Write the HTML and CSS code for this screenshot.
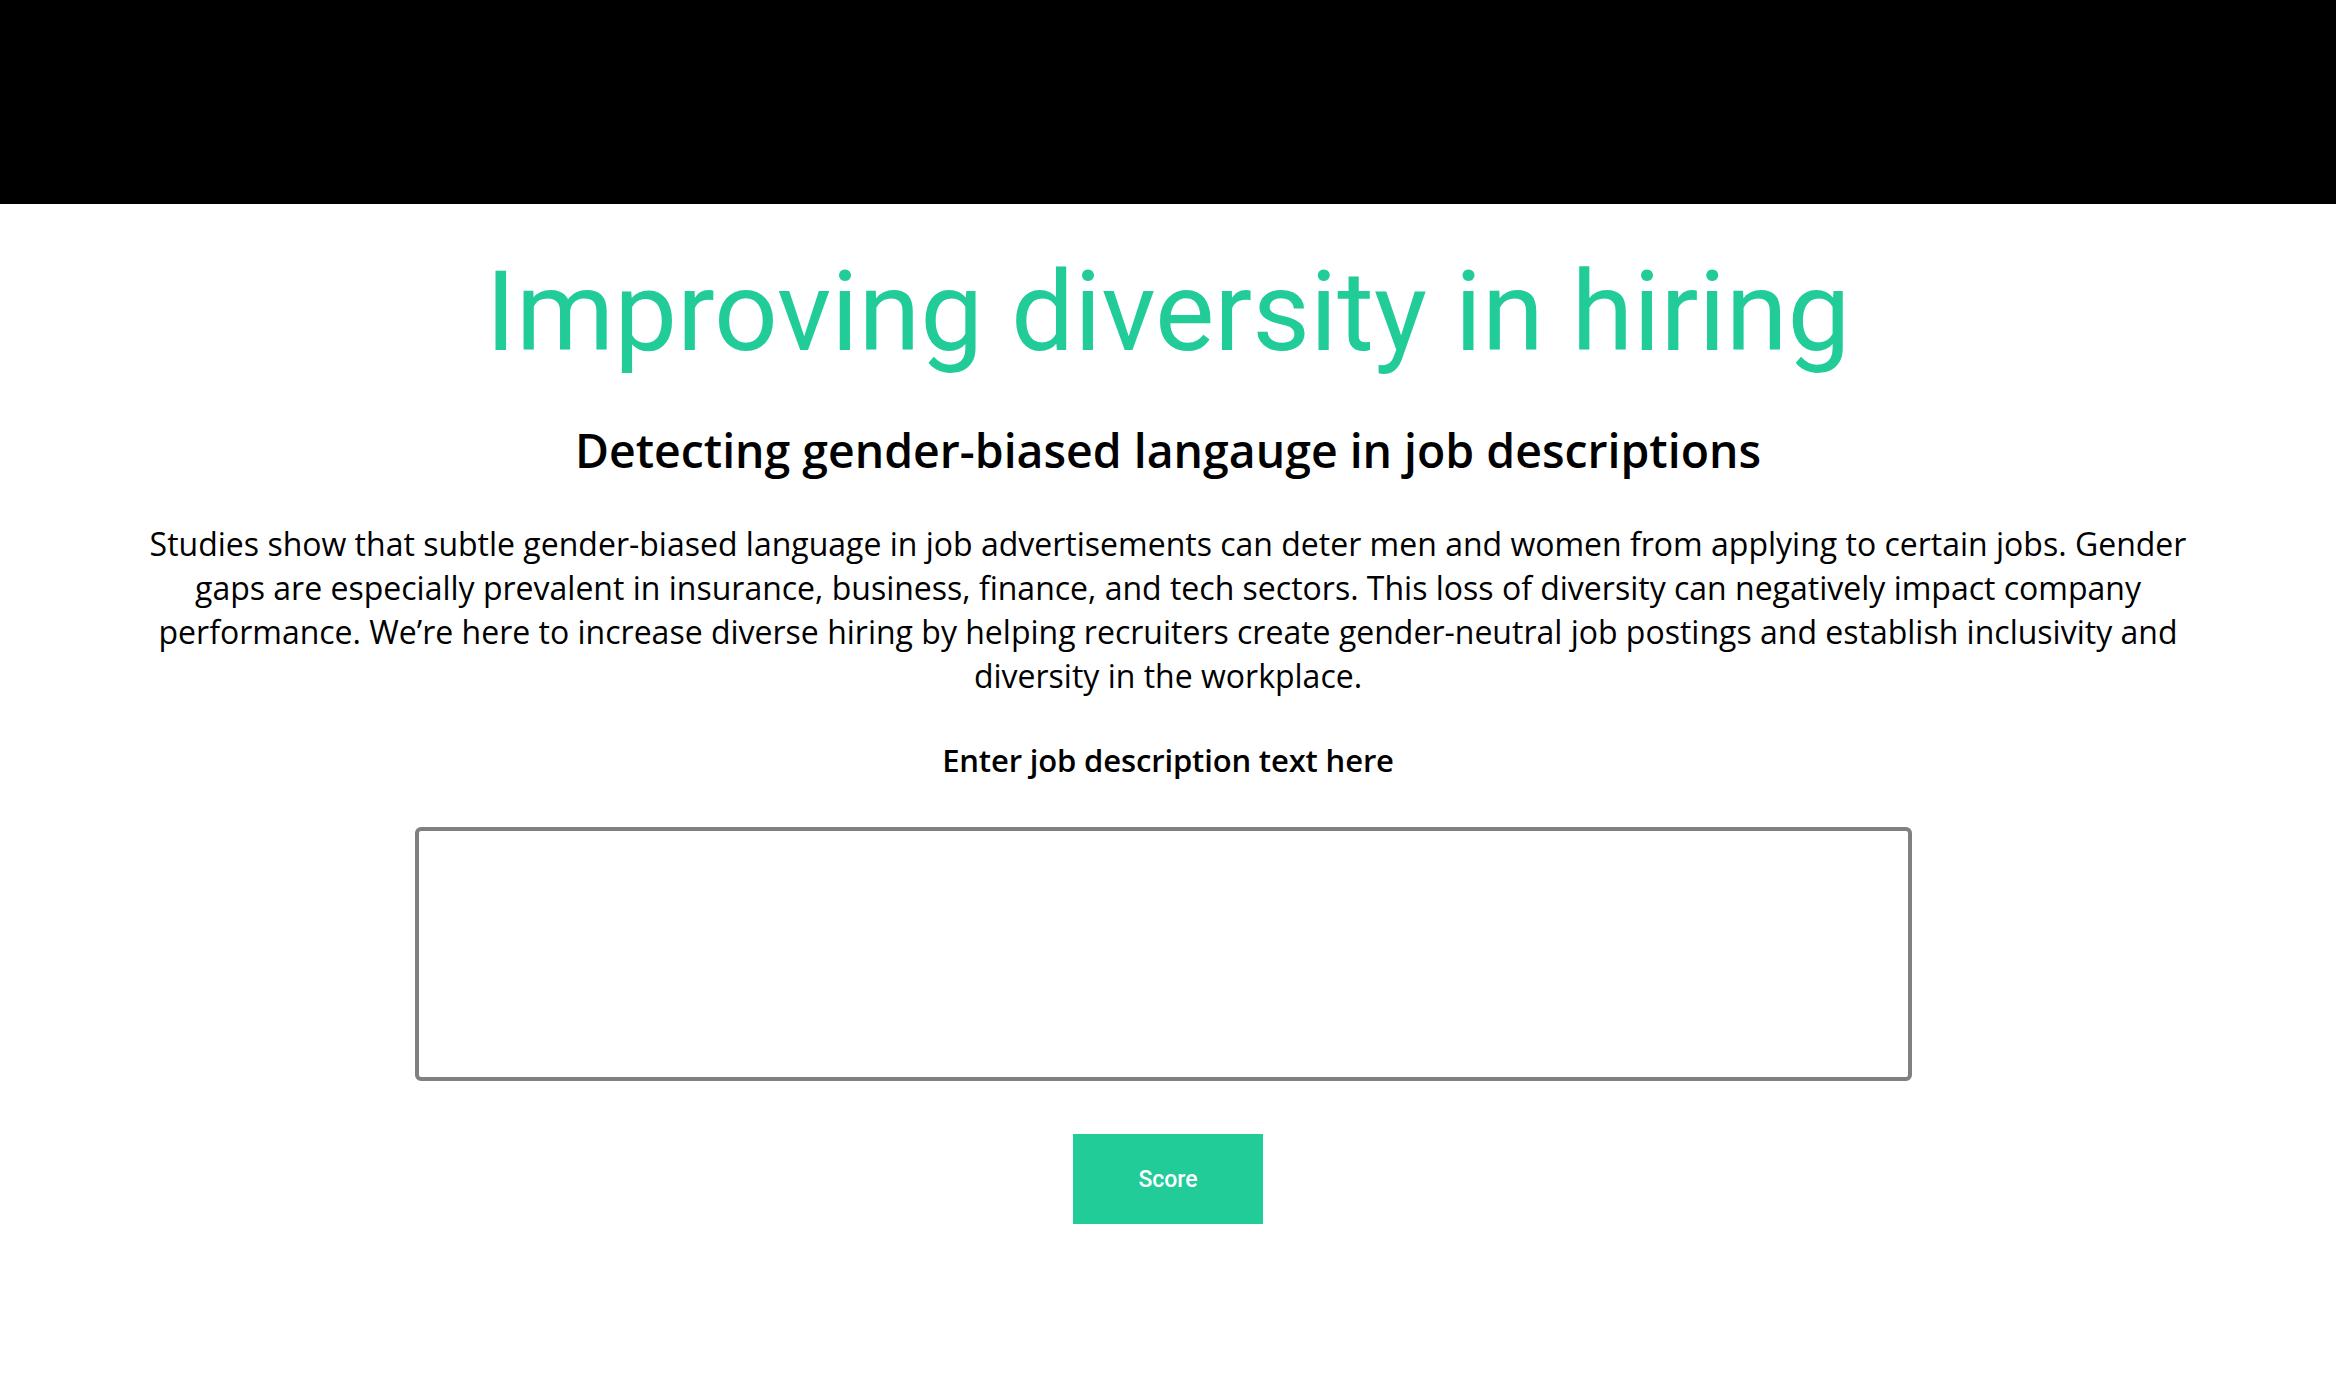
FILE: index.html
```html
<!DOCTYPE html>
<html>
<head>
<meta charset="utf-8">
<link rel="stylesheet" href="styles.css">
</head>
<body>
<header class="topbar"></header>
<main class="content">
  <h1 class="title">Improving diversity in hiring</h1>
  <h2 class="subtitle">Detecting gender-biased langauge in job descriptions</h2>
  <p class="intro">Studies show that subtle gender-biased language in job advertisements can deter men and women from applying to certain jobs. Gender gaps are especially prevalent in insurance, business, finance, and tech sectors. This loss of diversity can negatively impact company performance. We’re here to increase diverse hiring by helping recruiters create gender-neutral job postings and establish inclusivity and diversity in the workplace.</p>
  <form class="form">
    <label class="label" for="jd">Enter job description text here</label>
    <textarea id="jd" class="jd-input"></textarea>
    <button type="button" class="score-btn">Score</button>
  </form>
</main>
</body>
</html>
```

FILE: styles.css
```css
html, body {
  margin: 0;
  padding: 0;
  background: #ffffff;
}

.topbar {
  height: 204px;
  background: #000000;
}

.content {
  display: flex;
  flex-direction: column;
  align-items: center;
  text-align: center;
}

.title {
  margin: 42px 0 0;
  font-family: Roboto, sans-serif;
  font-weight: 400;
  font-size: 112px;
  line-height: 132px;
  color: #21cc99;
}

.subtitle {
  margin: 40px 0 0;
  font-family: "Open Sans", sans-serif;
  font-weight: 600;
  font-size: 46.4px;
  line-height: 64px;
  color: #000000;
}

.intro {
  margin: 40px 0 0;
  width: 2080px;
  font-family: "Open Sans", sans-serif;
  font-weight: 400;
  font-size: 32px;
  line-height: 44px;
  color: #000000;
}

.form {
  display: flex;
  flex-direction: column;
  align-items: center;
}

.label {
  margin-top: 40px;
  font-family: "Open Sans", sans-serif;
  font-weight: 600;
  font-size: 31px;
  line-height: 44px;
  letter-spacing: -0.15px;
  color: #000000;
}

.jd-input {
  box-sizing: border-box;
  margin: 45px 9px 0 0;
  width: 1497px;
  height: 254px;
  border: 4px solid #808080;
  border-radius: 6px;
  resize: none;
  outline: none;
  background: #ffffff;
}

.score-btn {
  margin-top: 53px;
  width: 190px;
  height: 90px;
  border: none;
  background: #21cc99;
  color: #ffffff;
  font-family: Roboto, "Liberation Sans", Arial, sans-serif;
  font-size: 23px;
  font-weight: 500;
  padding: 0;
}
```
